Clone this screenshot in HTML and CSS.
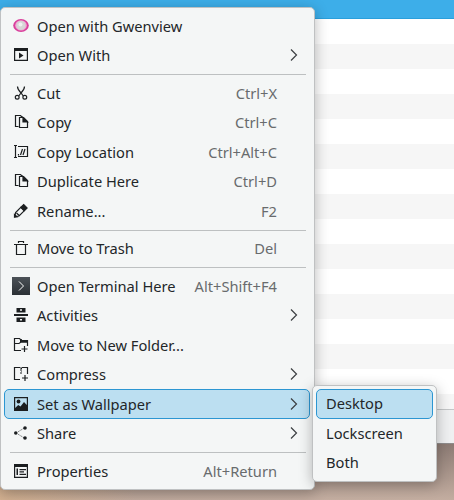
FILE: index.html
```html
<!DOCTYPE html>
<html lang="en">
<head>
    <meta charset="UTF-8">
    <meta name="viewport" content="width=device-width, initial-scale=1.0">
    <title>File context menu</title>
    <link rel="stylesheet" href="styles.css">
</head>
<body>
    <div class="window">
        <div class="selected-row"></div>
        <div class="file-list"></div>
        <div class="status-bar"></div>
    </div>
    <div class="wallpaper"></div>

    <ul class="menu main-menu">
        <li class="item">
            <svg class="icon" viewBox="0 0 18 18">
                <ellipse cx="9" cy="8.5" rx="7.8" ry="6.5" fill="#d83f9b"/>
                <ellipse cx="9" cy="8.4" rx="5.8" ry="5.2" fill="#f0a9d3"/>
                <circle cx="9" cy="8.4" r="4.5" fill="#d6d6d6"/>
                <circle cx="8.5" cy="7.5" r="2" fill="#f0f0f0"/>
            </svg>
            <span class="label">Open with Gwenview</span>
        </li>
        <li class="item">
            <svg class="icon" viewBox="0 0 18 18">
                <path d="M2 2h14v13H2zM3.2 5v8.800h11.600V5z" fill="#1b1e20" fill-rule="evenodd"/>
                <path d="M7 6.500v6l4.500-3z" fill="#1b1e20"/>
            </svg>
            <span class="label">Open With</span>
            <svg class="arrow" viewBox="0 0 8 12"><path d="M1 .5L6.500 6L1 11.500"/></svg>
        </li>
        <li class="separator"></li>
        <li class="item">
            <svg class="icon line" viewBox="0 0 18 18">
                <path d="M5.500 2.500C5.500 5 6.500 6.500 9 9L11.300 12M12.500 2.500C12.500 5 11.500 6.500 9 9L6.700 12"/>
                <circle cx="5.200" cy="13.300" r="1.900"/>
                <circle cx="12.800" cy="13.300" r="1.900"/>
            </svg>
            <span class="label">Cut</span>
            <span class="shortcut">Ctrl+X</span>
        </li>
        <li class="item">
            <svg class="icon line" viewBox="0 0 18 18">
                <path d="M6.500 13.500h-3v-11h5l2 2M7.500 4.500h4l4 4v6h-8z"/>
                <path d="M11 4.500v4.500h4.500z" fill="#1b1e20"/>
            </svg>
            <span class="label">Copy</span>
            <span class="shortcut">Ctrl+C</span>
        </li>
        <li class="item">
            <svg class="icon line" viewBox="0 0 18 18">
                <path d="M2 2.500h3M3.500 2.500v12M2 14.500h3M6 3.500h9.500v10H6M6.500 11v1.500M8.500 12l2-6M11 12l2-6"/>
            </svg>
            <span class="label">Copy Location</span>
            <span class="shortcut">Ctrl+Alt+C</span>
        </li>
        <li class="item">
            <svg class="icon line" viewBox="0 0 18 18">
                <path d="M6.500 13.500h-3v-11h5l2 2M7.500 4.500h4l4 4v6h-8z"/>
                <path d="M11 4.500v4.500h4.500z" fill="#1b1e20"/>
            </svg>
            <span class="label">Duplicate Here</span>
            <span class="shortcut">Ctrl+D</span>
        </li>
        <li class="item">
            <svg class="icon line" viewBox="0 0 18 18">
                <path d="M2.700 14.800l.9-4.200L8.800 5.400l3.400 3.400L7 14z"/>
                <path d="M9 5.200l2.700-2.700 3.400 3.400-2.700 2.700z" fill="#1b1e20"/>
                <path d="M2.500 15v-2.500l2.500 2.300zM4.500 11l2.700 2.500"/>
            </svg>
            <span class="label">Rename...</span>
            <span class="shortcut">F2</span>
        </li>
        <li class="separator"></li>
        <li class="item">
            <svg class="icon line" viewBox="0 0 18 18">
                <path d="M2 5.500h14M6.500 4V2.500h5V4M4.500 6v9.500h9V6"/>
            </svg>
            <span class="label">Move to Trash</span>
            <span class="shortcut">Del</span>
        </li>
        <li class="separator"></li>
        <li class="item">
            <svg class="icon" viewBox="0 0 18 18">
                <defs>
                    <linearGradient id="terminal" x1="0" y1="0" x2="0" y2="1">
                        <stop offset="0" stop-color="#4b5157"/>
                        <stop offset="1" stop-color="#2b3035"/>
                    </linearGradient>
                </defs>
                <rect width="18" height="18" fill="url(#terminal)"/>
                <path d="M7 4.500l4.500 4.500L7 13.500" fill="none" stroke="#fcfcfc"/>
            </svg>
            <span class="label">Open Terminal Here</span>
            <span class="shortcut">Alt+Shift+F4</span>
        </li>
        <li class="item">
            <svg class="icon" viewBox="0 0 18 18">
                <path d="M4.500 2h9v4.500h-9zM8 3.200v1.600h2V3.200zM2 8h14v2H2zM4.500 11.500h9V16h-9zM8 13v1.600h2V13z" fill="#1b1e20" fill-rule="evenodd"/>
            </svg>
            <span class="label">Activities</span>
            <svg class="arrow" viewBox="0 0 8 12"><path d="M1 .5L6.500 6L1 11.500"/></svg>
        </li>
        <li class="item">
            <svg class="icon line" viewBox="0 0 18 18">
                <path d="M9 14.500H2.500v-12h5l2 2h6V10M3 7.500h4l2-1.500h6M12.500 10v6M9.500 13h6"/>
                <path d="M8 3h1.500l1 1.500h5V6.500H8z" fill="#1b1e20" stroke="none"/>
            </svg>
            <span class="label">Move to New Folder...</span>
        </li>
        <li class="item">
            <svg class="icon line" viewBox="0 0 18 18">
                <path d="M8 14.500H2.500v-12H8M10 2.500h5.500V9M13 10v6M10 13h6"/>
                <path d="M8 3h2M8 5h1M9 4h1M9 6h1M8 8h2"/>
            </svg>
            <span class="label">Compress</span>
            <svg class="arrow" viewBox="0 0 8 12"><path d="M1 .5L6.500 6L1 11.500"/></svg>
        </li>
        <li class="item active">
            <svg class="icon" viewBox="0 0 18 18">
                <path d="M2 2h14v14H2zM3.200 3.200v9.800l3-3 2.300 1.500L12 7l2.800 3V3.200z" fill="#1b1e20" fill-rule="evenodd"/>
                <circle cx="6.500" cy="6.500" r="1.900" fill="#1b1e20"/>
            </svg>
            <span class="label">Set as Wallpaper</span>
            <svg class="arrow" viewBox="0 0 8 12"><path d="M1 .5L6.500 6L1 11.500"/></svg>
        </li>
        <li class="item">
            <svg class="icon" viewBox="0 0 18 18">
                <g fill="#1b1e20">
                    <circle cx="3.800" cy="9" r="1.800"/>
                    <circle cx="13" cy="4" r="1.800"/>
                    <circle cx="13" cy="14" r="1.800"/>
                </g>
                <path d="M6.500 7.500l5-3M6.500 10.500l5 3" fill="none" stroke="#1b1e20" stroke-dasharray="1 1.500"/>
            </svg>
            <span class="label">Share</span>
            <svg class="arrow" viewBox="0 0 8 12"><path d="M1 .5L6.500 6L1 11.500"/></svg>
        </li>
        <li class="separator"></li>
        <li class="item">
            <svg class="icon" viewBox="0 0 18 18">
                <path d="M2 2h14v14H2zM3.200 5v9.800h11.600V5zM4.500 6.500H6v6.500H4.500zM7.500 7H14v1.200H7.500zM7.500 9.300H12v1.200H7.500zM7.500 11.700H14v1.200H7.500z" fill="#1b1e20" fill-rule="evenodd"/>
            </svg>
            <span class="label">Properties</span>
            <span class="shortcut">Alt+Return</span>
        </li>
    </ul>

    <ul class="menu sub-menu">
        <li class="item active">Desktop</li>
        <li class="item">Lockscreen</li>
        <li class="item">Both</li>
    </ul>
</body>
</html>
```
FILE: styles.css
```css
* {
    box-sizing: border-box;
}
body {
    position: relative;
    display: flex;
    flex-direction: column;
    height: 500px;
    margin: 0;
    overflow: hidden;
    font-family: "Noto Sans", sans-serif;
    font-size: 14.67px;
    color: #232629;
}
.window {
    display: flex;
    flex-direction: column;
    height: 444px;
    border-bottom: 1px solid #8f8c8c;
}
.selected-row {
    height: 19px;
    background-color: #3daee9;
    border-bottom: 1px solid #2a9fdc;
}
.file-list {
    flex: 1;
    background: repeating-linear-gradient(#fff 0, #fff 25px, #f6f6f6 25px, #f6f6f6 50px);
}
.status-bar {
    height: 34px;
    background-color: #eff0f1;
    border-top: 1px solid #c4c6c7;
}
.wallpaper {
    flex: 1;
    background: linear-gradient(90deg, rgba(226,180,130,0.5), rgba(226,180,130,0) 30%),
                linear-gradient(#8c7b74, #c3ada0);
}
.menu {
    position: absolute;
    margin: 0;
    list-style: none;
    background-color: #f4f6f6;
    border: 1px solid #bfc1c2;
    border-radius: 5px;
    box-shadow: 0 3px 14px rgba(0,0,0,0.28);
}
.main-menu {
    left: 0;
    top: 7px;
    width: 315px;
    height: 483px;
    padding: 3px 4px 4px 3px;
}
.sub-menu {
    left: 312px;
    top: 385px;
    width: 125px;
    height: 97px;
    padding: 3px;
}
.item {
    display: flex;
    align-items: center;
    height: 29.5px;
    padding: 0 11px 0 7px;
    border: 1px solid transparent;
    border-radius: 5px;
    white-space: nowrap;
}
.sub-menu .item {
    padding-left: 9px;
    padding-bottom: 1px;
}
.active {
    background-color: #bcdff1;
    border-color: #2c96d2;
}
.separator {
    height: 8px;
    margin: 0 4px 0 6px;
    padding-top: 4px;
}
.separator::before {
    content: "";
    display: block;
    height: 1px;
    background-color: #bdc0c1;
}
.icon {
    flex: none;
    width: 18px;
    height: 18px;
    margin-right: 7px;
}
.line {
    fill: none;
    stroke: #1b1e20;
    stroke-width: 1.2;
}
.label {
    flex: 1;
}
.shortcut {
    margin-right: 21px;
    color: #686b6d;
}
.arrow {
    width: 8px;
    height: 12px;
    fill: none;
    stroke: #3c3f42;
    stroke-width: 1.2;
}
```
